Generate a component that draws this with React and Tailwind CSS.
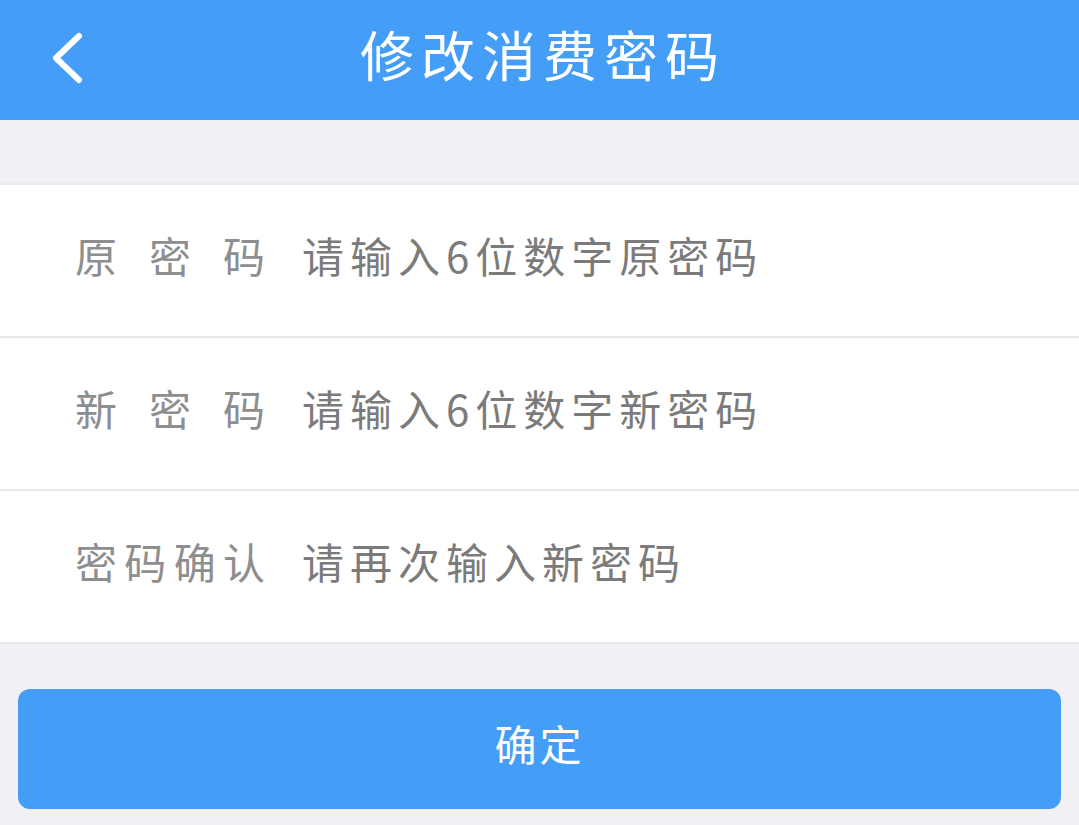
import React from "react";

const ROWS = [
  { label: ["原", "密", "码"], placeholder: "请输入6位数字原密码" },
  { label: ["新", "密", "码"], placeholder: "请输入6位数字新密码" },
  { label: ["密", "码", "确", "认"], placeholder: "请再次输入新密码" },
];

export default function App() {
  return (
    <div
      className="w-[1079px] h-[825px] bg-[#f1f0f5] overflow-hidden"
      style={{ fontFamily: '"Noto Sans CJK SC", "Noto Sans", sans-serif' }}
    >
      <header className="h-[120px] bg-[#449ef8] flex items-center relative">
        <button className="absolute left-[44px] top-[28px] w-[44px] h-[60px] flex items-center justify-center">
          <svg width="40" height="56" viewBox="0 0 40 56" fill="none">
            <path
              d="M33 6 L10 28 L33 50"
              stroke="white"
              strokeWidth="6"
              strokeLinecap="round"
              strokeLinejoin="round"
            />
          </svg>
        </button>
        <h1 className="flex-1 text-center text-white text-[54px] tracking-[7px] leading-none pb-[12px] pl-[7px]">
          修改消费密码
        </h1>
      </header>

      <div className="h-[63px]" />

      <div className="bg-white border-t-2 border-[#ebebef]">
        {ROWS.map((r, i) => (
          <div
            key={i}
            className="h-[153px] flex items-center pl-[75px] border-b-2 border-[#e8e8ec]"
          >
            <div className="w-[190px] flex justify-between text-[42px] text-[#8e8e8e] leading-none pb-[12px]">
              {r.label.map((c, j) => (
                <span key={j}>{c}</span>
              ))}
            </div>
            <input
              className="ml-[37px] flex-1 outline-none bg-transparent text-[42px] tracking-[6px] leading-none pb-[12px] placeholder:text-[#7b7b7b]"
              placeholder={r.placeholder}
              type="password"
            />
          </div>
        ))}
      </div>

      <div className="px-[18px] pt-[45px]">
        <button className="w-full h-[120px] rounded-[12px] bg-[#449ef8] text-white text-[42px] tracking-[3px] pb-[14px]">
          确定
        </button>
      </div>
    </div>
  );
}
